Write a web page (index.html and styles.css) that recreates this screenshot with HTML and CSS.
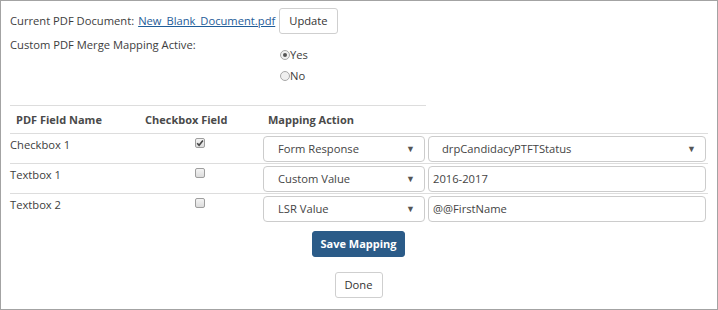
FILE: index.html
```html
<!DOCTYPE html>
<html lang="en">

<head>
    <meta charset="UTF-8">
    <meta name="viewport" content="width=device-width, initial-scale=1.0">
    <title>PDF Merge Mapping</title>
    <link rel="stylesheet" href="styles.css">
</head>

<body>

<div class="frame">

    <!-- Documento actual -->
    <div class="doc-row">
        <span>Current PDF Document:</span>
        <a href="#" class="doc-link">New_Blank_Document.pdf</a>
        <button class="btn">Update</button>
    </div>

    <!-- Mapping activo -->
    <div class="active-row">
        <div class="active-label">Custom PDF Merge Mapping Active:</div>
        <div class="radios">
            <label class="radio-item"><span class="radio checked"></span>Yes</label>
            <label class="radio-item"><span class="radio"></span>No</label>
        </div>
    </div>

    <hr class="divider">

    <!-- Tabla de campos -->
    <table class="map-table">
        <colgroup>
            <col class="col-name">
            <col class="col-check">
            <col class="col-action">
            <col class="col-value">
        </colgroup>
        <thead>
        <tr>
            <th>PDF Field Name</th>
            <th>Checkbox Field</th>
            <th>Mapping Action</th>
            <th></th>
        </tr>
        </thead>
        <tbody>
        <tr>
            <td>Checkbox 1</td>
            <td class="center">
                <span class="cb">
                    <svg width="8" height="8" viewBox="0 0 8 8"><path d="M1.2 4.2 L3.1 6.2 L6.9 1.6" fill="none" stroke="#444" stroke-width="1.6"/></svg>
                </span>
            </td>
            <td><div class="select"><span>Form Response</span><span class="arrow">&#9660;</span></div></td>
            <td><div class="select wide"><span>drpCandidacyPTFTStatus</span><span class="arrow">&#9660;</span></div></td>
        </tr>
        <tr>
            <td>Textbox 1</td>
            <td class="center"><span class="cb"></span></td>
            <td><div class="select"><span>Custom Value</span><span class="arrow">&#9660;</span></div></td>
            <td><input class="text-input" type="text" value="2016-2017"></td>
        </tr>
        <tr>
            <td>Textbox 2</td>
            <td class="center"><span class="cb"></span></td>
            <td><div class="select"><span>LSR Value</span><span class="arrow">&#9660;</span></div></td>
            <td><input class="text-input" type="text" value="@@FirstName"></td>
        </tr>
        </tbody>
    </table>

    <div class="actions">
        <button class="btn btn-primary">Save Mapping</button>
        <button class="btn btn-done">Done</button>
    </div>

</div>

</body>
</html>
```

FILE: styles.css
```css
* {
    box-sizing: border-box;
}
body {
    margin: 0;
    font-family: "Open Sans", sans-serif;
    font-size: 11.2px;
    color: #3d3d3d;
    background: #fff;
}
.frame {
    width: 718px;
    height: 310px;
    border: 1px solid #a3a3a3;
    padding: 6px 10px 0 9px;
}
.doc-row {
    display: flex;
    align-items: center;
    height: 27px;
}
.doc-link {
    color: #1f5d99;
    margin-left: 4px;
}
.btn {
    font-family: "Open Sans", sans-serif;
    font-size: 11.2px;
    height: 26px;
    padding: 0 9px;
    background: #fff;
    color: #333;
    border: 1px solid #cfcfcf;
    border-radius: 3px;
}
.doc-row .btn {
    margin-left: 4px;
}
.active-row {
    display: flex;
    margin-top: 3px;
    line-height: 16px;
}
.active-label {
    width: 270px;
}
.radios {
    margin-top: 7px;
}
.radio-item {
    display: flex;
    align-items: center;
    height: 21px;
}
.radio {
    width: 10px;
    height: 10px;
    border: 1px solid #a8a8a8;
    border-radius: 50%;
    background: #f0f0f0;
    display: inline-flex;
    align-items: center;
    justify-content: center;
}
.radio.checked::after {
    content: "";
    width: 4px;
    height: 4px;
    border-radius: 50%;
    background: #555;
}
.divider {
    width: 416px;
    margin: 19px 0 0 0;
    border: none;
    border-top: 1px solid #ddd;
}
.map-table {
    width: 698px;
    table-layout: fixed;
    border-collapse: collapse;
}
.col-name {
    width: 129px;
}
.col-check {
    width: 123px;
}
.col-action {
    width: 164px;
}
.col-value {
    width: 282px;
}
.map-table th {
    height: 27px;
    text-align: left;
    padding: 0 6px;
    font-size: 11px;
    font-weight: bold;
    color: #4a4a4a;
}
.map-table td {
    border-top: 1px solid #ddd;
    vertical-align: top;
    padding: 2px 3px 1px 1px;
    line-height: 17px;
}
.map-table td:first-child {
    padding-left: 0;
}
.map-table td.center {
    text-align: center;
    padding: 2px 1px 1px 0;
}
.cb {
    display: inline-flex;
    align-items: center;
    justify-content: center;
    width: 10px;
    height: 10px;
    margin-top: 2px;
    border: 1px solid #9e9e9e;
    border-radius: 2px;
    background: linear-gradient(#f4f4f4, #dcdcdc);
    vertical-align: top;
}
.select {
    display: flex;
    align-items: center;
    justify-content: space-between;
    height: 26px;
    width: 162px;
    padding: 0 9px 0 14px;
    border: 1px solid #ccc;
    border-radius: 4px;
    background: #fff;
    color: #444;
}
.select.wide {
    width: 278px;
    margin-left: 1px;
    padding-left: 13px;
}
.arrow {
    font-size: 9px;
    color: #555;
}
.text-input {
    display: block;
    width: 278px;
    height: 26px;
    margin-left: 1px;
    padding: 0 4px;
    font-family: "Open Sans", sans-serif;
    font-size: 11.2px;
    color: #444;
    border: 1px solid #ccc;
    border-radius: 4px;
}
.actions {
    display: flex;
    flex-direction: column;
    align-items: center;
    gap: 15px;
    margin-top: 8px;
}
.btn-primary {
    background: #2b5b88;
    border-color: #2b5b88;
    color: #fff;
    font-size: 11px;
    font-weight: bold;
    padding: 0 7px;
}
.btn-done {
    padding: 0 9px;
}
```
